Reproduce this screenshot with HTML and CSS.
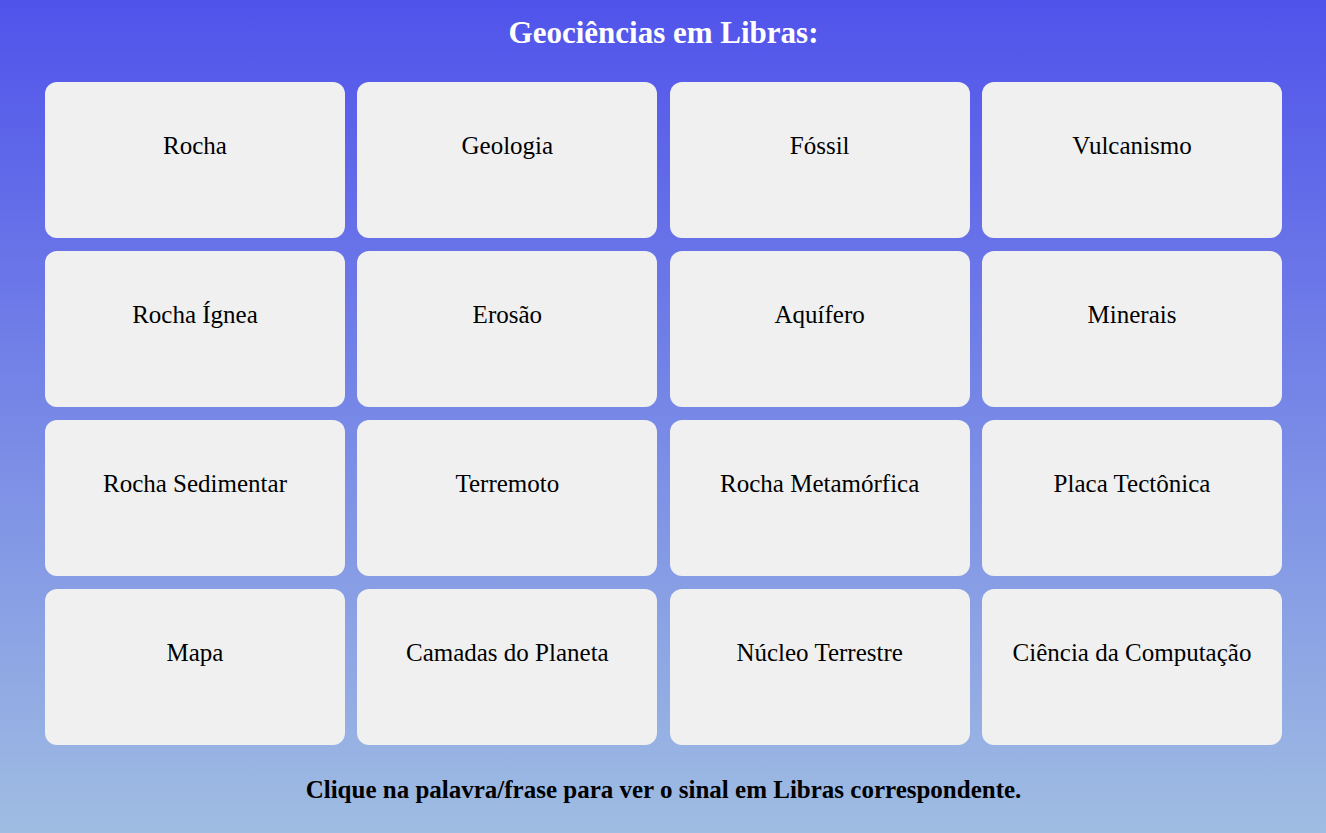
FILE: index.html
```html
<!DOCTYPE html>
<html lang="pt-BR">
<head>
<meta charset="utf-8">
<title>Geociências em Libras</title>
<link rel="stylesheet" href="styles.css">
</head>
<body>
<main class="page">
  <h1 class="title">Geociências em Libras:</h1>
  <div class="grid">
    <div class="card">Rocha</div>
    <div class="card">Geologia</div>
    <div class="card">Fóssil</div>
    <div class="card">Vulcanismo</div>
    <div class="card">Rocha Ígnea</div>
    <div class="card">Erosão</div>
    <div class="card">Aquífero</div>
    <div class="card">Minerais</div>
    <div class="card">Rocha Sedimentar</div>
    <div class="card">Terremoto</div>
    <div class="card">Rocha Metamórfica</div>
    <div class="card">Placa Tectônica</div>
    <div class="card">Mapa</div>
    <div class="card">Camadas do Planeta</div>
    <div class="card">Núcleo Terrestre</div>
    <div class="card">Ciência da Computação</div>
  </div>
  <p class="hint">Clique na palavra/frase para ver o sinal em Libras correspondente.</p>
</main>
</body>
</html>
```
FILE: styles.css
```css
html, body {
  margin: 0;
  padding: 0;
}
body {
  min-height: 100vh;
  background: linear-gradient(to bottom, #5053eb 0%, #9fbde2 100%);
  font-family: "Liberation Serif", "Times New Roman", serif;
  color: #000;
}
.page {
  padding: 0 44px 0 45px;
  min-height: 833px;
  box-sizing: border-box;
}
.title {
  margin: 0;
  padding-top: 15px;
  height: 82px;
  box-sizing: border-box;
  text-align: center;
  color: #fff;
  font-size: 31px;
  font-weight: bold;
  line-height: 36px;
}
.grid {
  display: grid;
  grid-template-columns: repeat(4, 1fr);
  column-gap: 12.33px;
  row-gap: 13px;
}
.card {
  height: 156px;
  box-sizing: border-box;
  background: #f0f0f0;
  border-radius: 12px;
  text-align: center;
  font-size: 25px;
  line-height: 28px;
  padding-top: 50px;
}
.hint {
  margin: 0;
  padding-top: 31px;
  text-align: center;
  font-size: 25px;
  font-weight: bold;
  line-height: 28px;
}
```
